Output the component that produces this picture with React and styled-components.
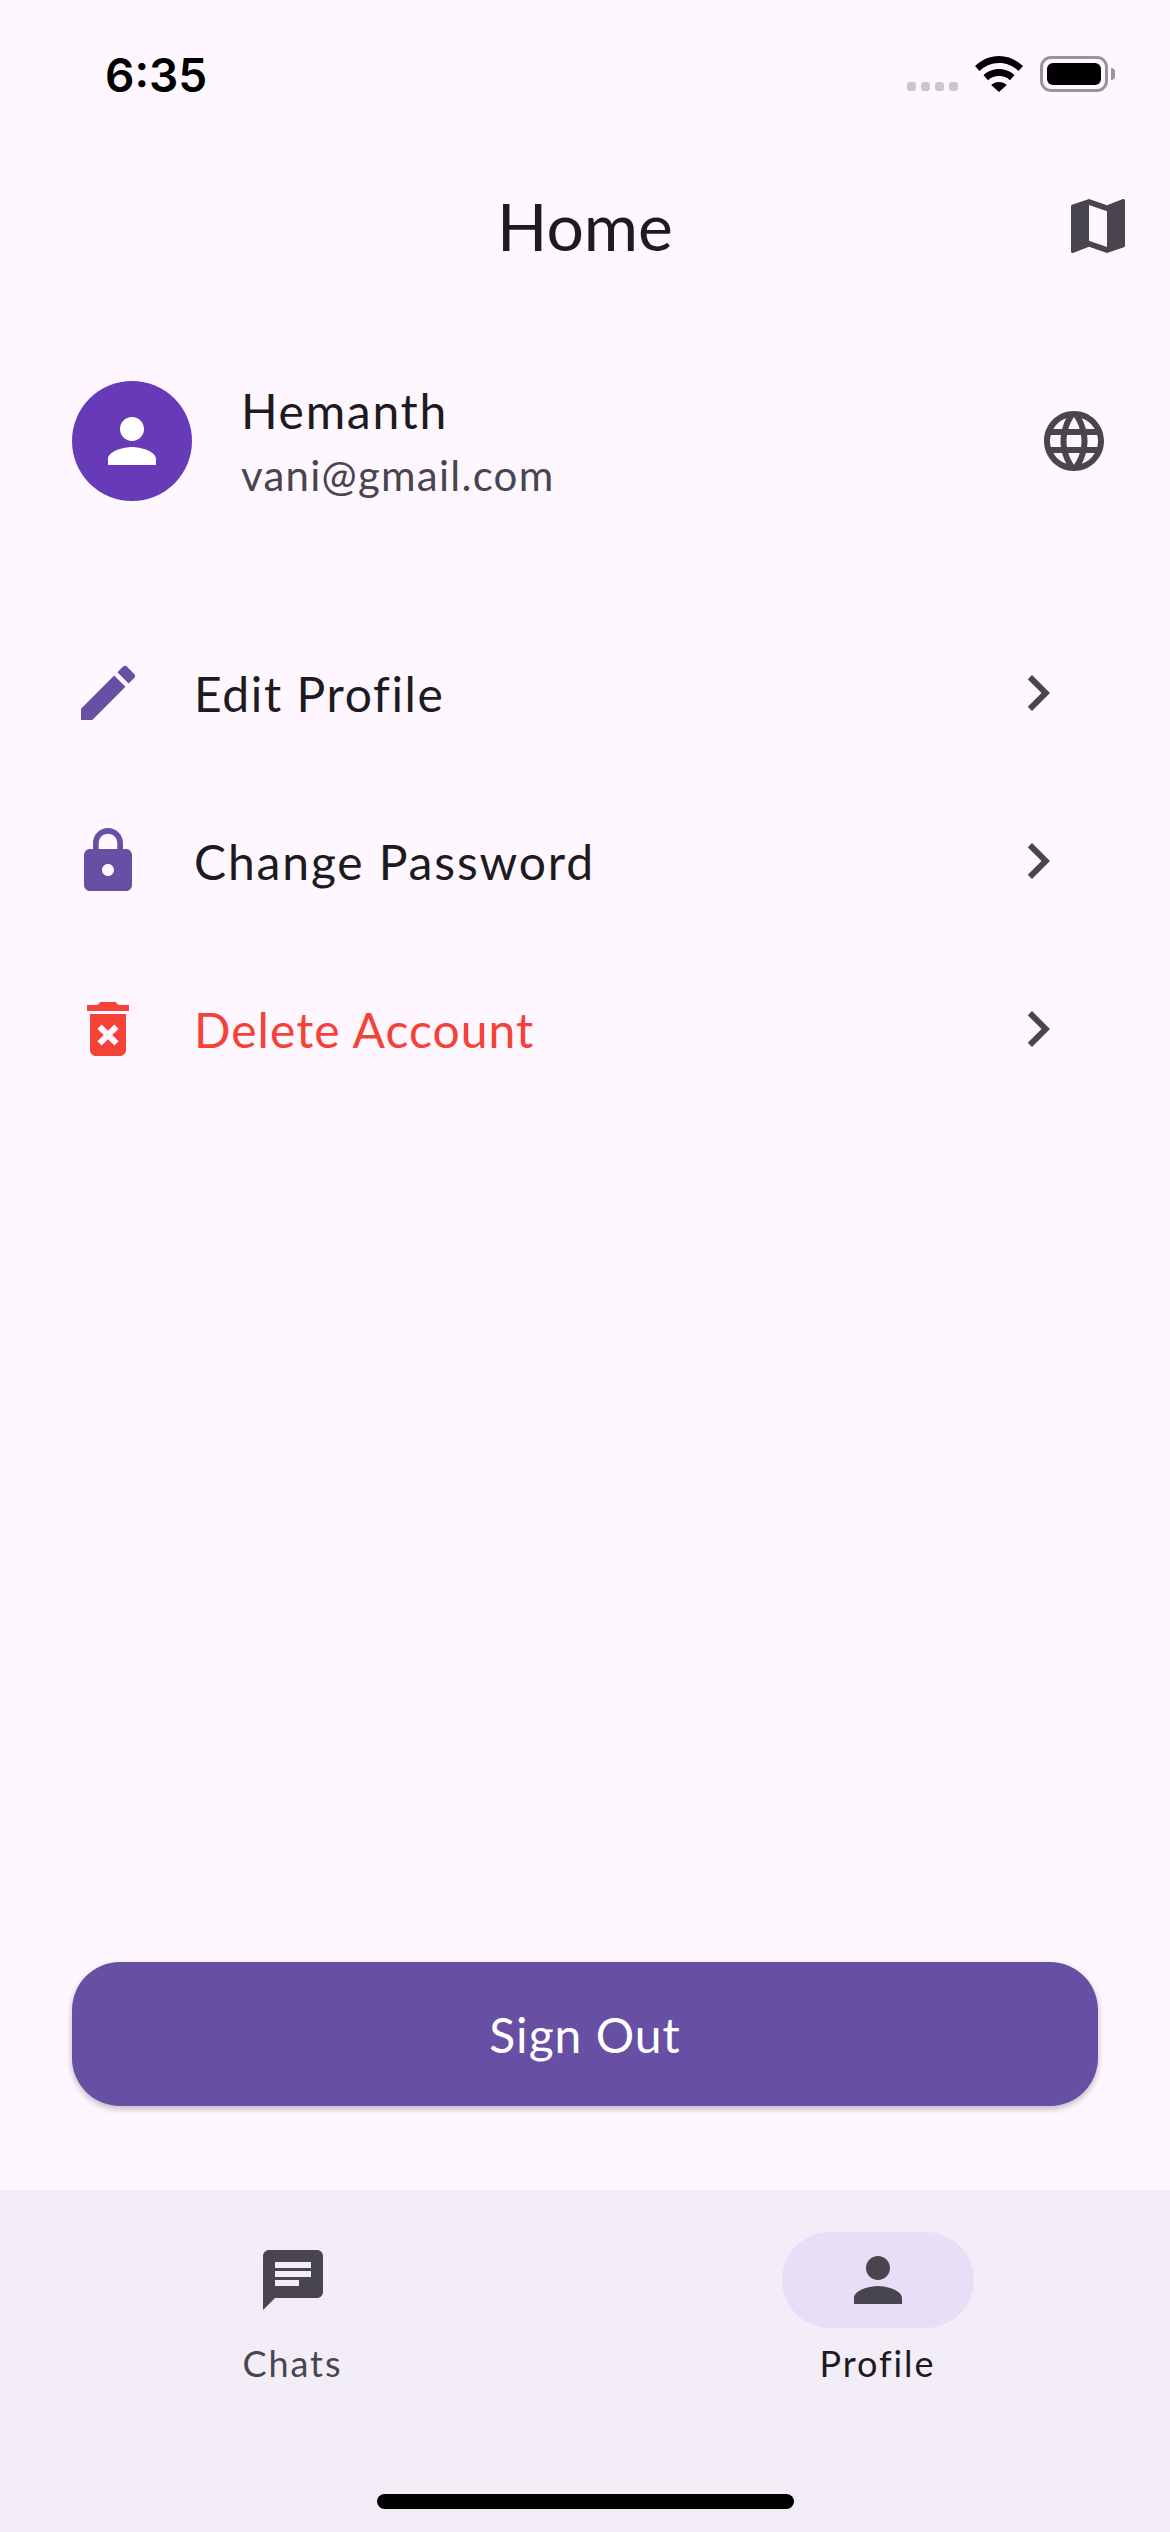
import React from 'react';
import styled, { createGlobalStyle } from 'styled-components';
import { MdMap, MdPerson, MdLanguage, MdEdit, MdLock, MdDeleteForever, MdChat, MdChevronRight } from 'react-icons/md';

const GlobalStyle = createGlobalStyle`
  html, body {
    margin: 0;
    padding: 0;
    background: #fef7ff;
  }
  * {
    box-sizing: border-box;
  }
`;

const Page = styled.div`
  width: 1170px;
  height: 2532px;
  display: flex;
  flex-direction: column;
  overflow: hidden;
  background: #fef7ff;
  font-family: Lato, "Open Sans", sans-serif;
  color: #1d1b20;
`;

const StatusBar = styled.div`
  height: 142px;
  flex: none;
  display: flex;
  justify-content: space-between;
  padding: 55px 55px 0 105px;
`;

const Clock = styled.div`
  font-family: Inter, "Liberation Sans", sans-serif;
  font-size: 46px;
  line-height: 40px;
  font-weight: 600;
  color: #000;
`;

const StatusIcons = styled.div`
  display: flex;
  align-items: flex-end;
  height: 37px;
`;

const SignalDots = styled.div`
  display: flex;
  gap: 5px;
  margin-right: 17px;
  margin-bottom: 1px;
`;

const Dot = styled.span`
  width: 9px;
  height: 9px;
  border-radius: 3px;
  background: #cbc7cc;
`;

const Wifi = styled.svg`
  width: 48px;
  height: 36px;
  margin-right: 17px;
`;

const Battery = styled.div`
  width: 68px;
  height: 36px;
  margin-right: 7px;
  padding: 4px;
  border: 3px solid #98949a;
  border-radius: 11px;
  position: relative;

  &::after {
    content: '';
    position: absolute;
    right: -10px;
    top: 9px;
    width: 4px;
    height: 12px;
    border-radius: 0 4px 4px 0;
    background: #98949a;
  }
`;

const BatteryFill = styled.div`
  height: 100%;
  background: #000;
  border-radius: 6px;
`;

const AppBar = styled.header`
  height: 168px;
  flex: none;
  display: grid;
  grid-template-columns: 1fr auto 1fr;
  align-items: center;
  padding-right: 36px;
  padding-left: 36px;
`;

const Title = styled.h1`
  grid-column: 2;
  margin: 0;
  font-size: 66px;
  line-height: 84px;
  font-weight: 400;
`;

const AppBarAction = styled.div`
  grid-column: 3;
  justify-self: end;
  display: flex;
  color: #49454f;
`;

const ProfileRow = styled.section`
  flex: none;
  display: flex;
  align-items: center;
  margin-top: 71px;
  padding: 0 60px 0 72px;
  height: 120px;
`;

const Avatar = styled.div`
  width: 120px;
  height: 120px;
  flex: none;
  display: flex;
  align-items: center;
  justify-content: center;
  border-radius: 50%;
  background: #673ab7;
  color: #fff;
`;

const ProfileText = styled.div`
  flex: 1;
  margin-left: 49px;
`;

const ProfileName = styled.div`
  font-size: 48px;
  line-height: 66px;
  letter-spacing: 1.7px;
`;

const ProfileEmail = styled.div`
  font-size: 42px;
  line-height: 60px;
  padding-top: 1px;
  letter-spacing: 1.25px;
  color: #49454f;
`;

const GlobeButton = styled.div`
  display: flex;
  color: #49454f;
`;

const Menu = styled.nav`
  flex: none;
  margin-top: 108px;
`;

const MenuRow = styled.div`
  height: 168px;
  display: flex;
  align-items: center;
  padding: 0 96px 0 72px;
  color: ${(p) => (p.$danger ? '#f44336' : '#1d1b20')};
`;

const MenuIcon = styled.div`
  display: flex;
  color: ${(p) => (p.$danger ? '#f44336' : '#6750a4')};
`;

const MenuLabel = styled.div`
  flex: 1;
  margin-left: 50px;
  padding-top: 1px;
  font-size: 48px;
  line-height: 66px;
  letter-spacing: ${(p) => p.$tracking}px;
`;

const Chevron = styled.div`
  display: flex;
  color: #49454f;
`;

const SignOut = styled.button`
  flex: none;
  display: block;
  margin: auto 72px 84px;
  width: 1026px;
  height: 144px;
  border: 0;
  border-radius: 48px;
  background: #6750a4;
  color: #fff;
  font-family: inherit;
  font-size: 48px;
  letter-spacing: 1px;
  box-shadow: 0 3px 6px rgba(0, 0, 0, 0.25);
`;

const BottomNav = styled.footer`
  flex: none;
  height: 342px;
  display: flex;
  flex-direction: column;
  background: #f3edf7;
  padding-top: 42px;
`;

const NavItems = styled.div`
  display: grid;
  grid-template-columns: 1fr 1fr;
`;

const NavItem = styled.div`
  display: flex;
  flex-direction: column;
  align-items: center;
  color: ${(p) => (p.$active ? '#1d1b20' : '#49454f')};
`;

const NavIndicator = styled.div`
  width: 192px;
  height: 96px;
  display: flex;
  align-items: center;
  justify-content: center;
  border-radius: 48px;
  color: #49454f;
  background: ${(p) => (p.$active ? '#e8def8' : 'transparent')};
`;

const NavLabel = styled.div`
  margin-top: 11px;
  font-size: 36px;
  line-height: 48px;
  letter-spacing: 1.95px;
`;

const HomeBar = styled.div`
  width: 417px;
  height: 15px;
  margin: auto auto 23px;
  border-radius: 8px;
  background: #000;
`;

const rows = [
  { label: 'Edit Profile', Icon: MdEdit, tracking: 1.6 },
  { label: 'Change Password', Icon: MdLock, tracking: 1.85 },
  { label: 'Delete Account', Icon: MdDeleteForever, tracking: 1.05, danger: true },
];

export default function App() {
  return (
    <Page>
      <GlobalStyle />
      <StatusBar>
        <Clock>6:35</Clock>
        <StatusIcons>
          <SignalDots>
            <Dot /><Dot /><Dot /><Dot />
          </SignalDots>
          <Wifi viewBox="0 0 48 36">
            <path d="M24 0C15 0 7 3.5 0 10l4.500 5C10 9.800 16.600 7 24 7s14 2.800 19.500 8l4.500-5C41 3.500 33 0 24 0z" />
            <path d="M24 13c-6 0-11.500 2.300-15.500 6.200l4.600 5C16 21.400 19.800 20 24 20s8 1.400 10.900 4.200l4.600-5C35.500 15.300 30 13 24 13z" />
            <path d="M24 26c-3 0-5.700 1.100-7.800 3L24 36l7.800-7c-2.100-1.900-4.800-3-7.800-3z" />
          </Wifi>
          <Battery>
            <BatteryFill />
          </Battery>
        </StatusIcons>
      </StatusBar>
      <AppBar>
        <Title>Home</Title>
        <AppBarAction>
          <MdMap size={72} />
        </AppBarAction>
      </AppBar>
      <ProfileRow>
        <Avatar>
          <MdPerson size={72} />
        </Avatar>
        <ProfileText>
          <ProfileName>Hemanth</ProfileName>
          <ProfileEmail>vani@gmail.com</ProfileEmail>
        </ProfileText>
        <GlobeButton>
          <MdLanguage size={72} />
        </GlobeButton>
      </ProfileRow>
      <Menu>
        {rows.map(({ label, Icon, tracking, danger }) => (
          <MenuRow key={label} $danger={danger}>
            <MenuIcon $danger={danger}>
              <Icon size={72} />
            </MenuIcon>
            <MenuLabel $tracking={tracking}>{label}</MenuLabel>
            <Chevron>
              <MdChevronRight size={72} />
            </Chevron>
          </MenuRow>
        ))}
      </Menu>
      <SignOut>Sign Out</SignOut>
      <BottomNav>
        <NavItems>
          <NavItem>
            <NavIndicator>
              <MdChat size={72} />
            </NavIndicator>
            <NavLabel>Chats</NavLabel>
          </NavItem>
          <NavItem $active>
            <NavIndicator $active>
              <MdPerson size={72} />
            </NavIndicator>
            <NavLabel>Profile</NavLabel>
          </NavItem>
        </NavItems>
        <HomeBar />
      </BottomNav>
    </Page>
  );
}
